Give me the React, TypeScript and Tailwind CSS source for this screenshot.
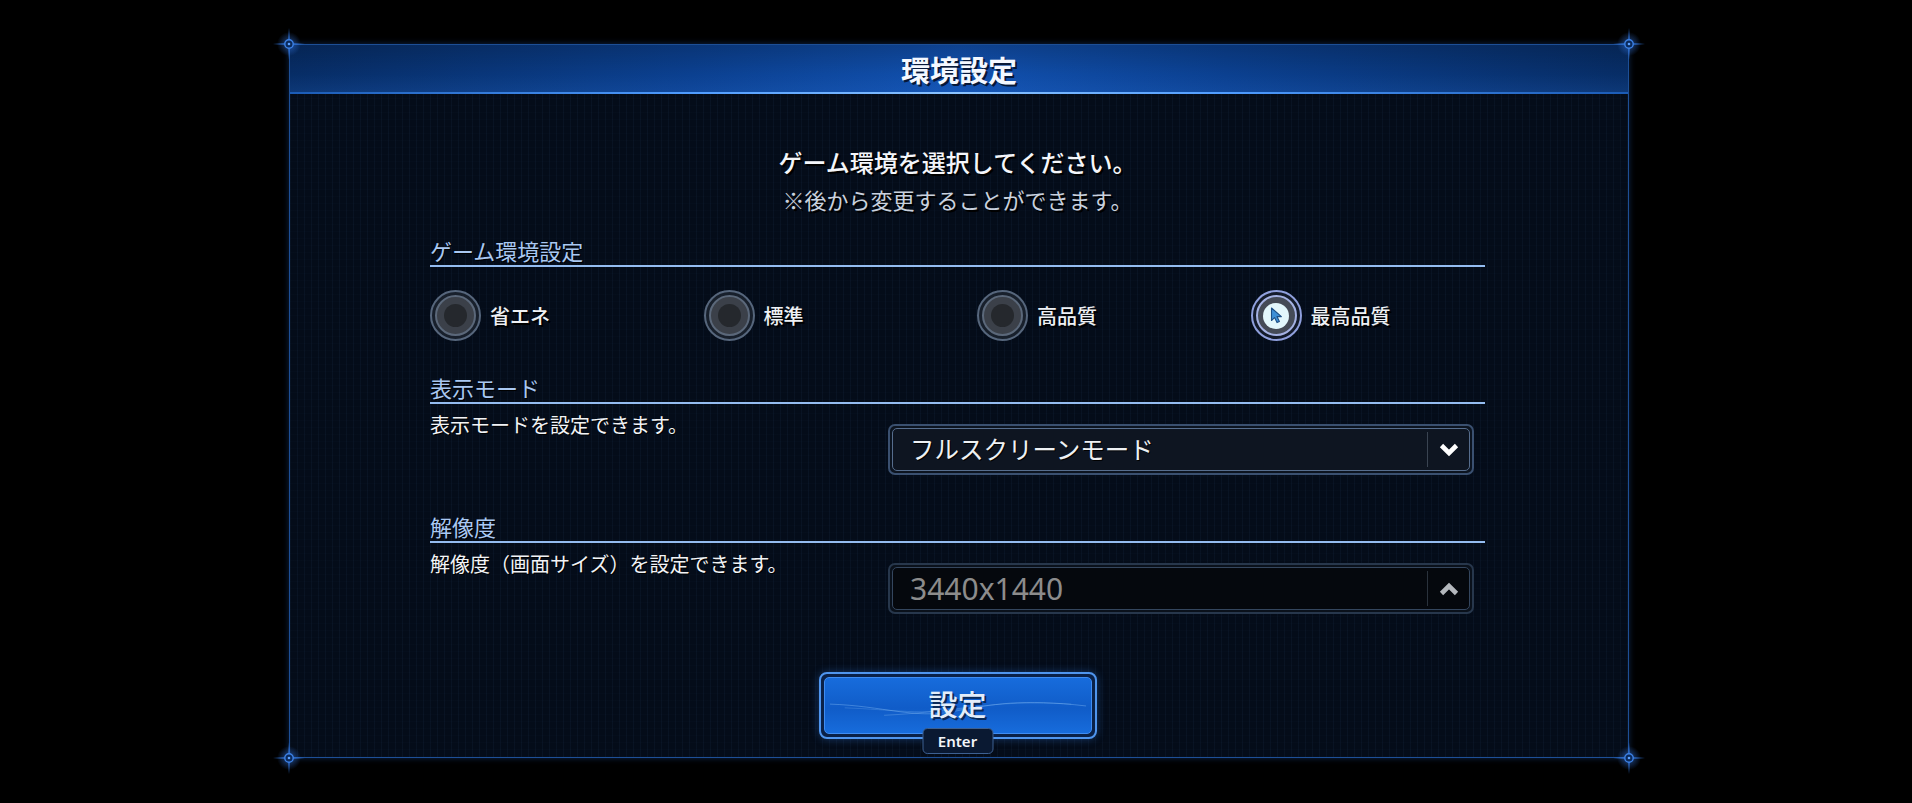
import React from "react";

const JP = "font-['Noto_Sans_CJK_JP','Noto_Sans',sans-serif]";

function CornerStar({ className }: { className: string }) {
  return (
    <svg
      className={"absolute w-[40px] h-[40px] pointer-events-none " + className}
      viewBox="0 0 40 40"
    >
      <defs>
        <radialGradient id="glow" cx="50%" cy="50%" r="50%">
          <stop offset="0%" stopColor="#3b82f6" stopOpacity="0.55" />
          <stop offset="100%" stopColor="#3b82f6" stopOpacity="0" />
        </radialGradient>
      </defs>
      <circle cx="20" cy="20" r="12" fill="url(#glow)" />
      <path d="M20 4 L21 19 L36 20 L21 21 L20 36 L19 21 L4 20 L19 19 Z" fill="#2f6fd0" />
      <circle cx="20" cy="20" r="4.2" fill="#0b2a5c" stroke="#3d82e6" strokeWidth="1.4" />
      <circle cx="20" cy="20" r="1.3" fill="#5aa0ff" />
    </svg>
  );
}

function Radio({ selected }: { selected?: boolean }) {
  if (selected) {
    return (
      <div className="w-[51px] h-[51px] shrink-0 rounded-full border-2 border-[#8f9fdc] bg-[#141b2b] p-[3px]">
        <div className="w-full h-full rounded-full border-2 border-[#a4b1e2] bg-[#454b57] p-[5.5px]">
          <div className="w-full h-full rounded-full bg-[#e3f7fc] flex items-center justify-center">
            <svg width="14" height="17" viewBox="0 0 14 17" className="ml-[2px]">
              <path
                d="M1.5 1 L1.5 13.5 L4.6 10.6 L7 15.6 L9.4 14.5 L7 9.6 L11.4 9.6 Z"
                fill="#3d8fd6"
                stroke="#1d4f86"
                strokeWidth="1.1"
                strokeLinejoin="round"
              />
            </svg>
          </div>
        </div>
      </div>
    );
  }
  return (
    <div className="w-[51px] h-[51px] shrink-0 rounded-full border-2 border-[#56667c] bg-[#18202c] p-[3px]">
      <div className="w-full h-full rounded-full border-2 border-[#5b687a] bg-[#3b4049] flex items-center justify-center">
        <div className="w-[23px] h-[23px] rounded-full bg-[#25282d]" />
      </div>
    </div>
  );
}

function SectionHeader({ children }: { children: React.ReactNode }) {
  return (
    <div className="border-b-2 border-[#94bcf0]">
      <div className={"text-[22px] leading-[29px] text-[#a9c8f2] [text-shadow:1px_1px_0_#000] " + JP}>
        {children}
      </div>
    </div>
  );
}

function Chevron({ up, color }: { up?: boolean; color: string }) {
  return (
    <svg width="20" height="16" viewBox="0 0 20 16">
      {up ? (
        <path d="M2.5 12.5 L10 5 L17.5 12.5" fill="none" stroke={color} strokeWidth="4.6" strokeLinejoin="miter" />
      ) : (
        <path d="M2.5 3.5 L10 11 L17.5 3.5" fill="none" stroke={color} strokeWidth="4.6" strokeLinejoin="miter" />
      )}
    </svg>
  );
}

function Dropdown({ value, disabled }: { value: string; disabled?: boolean }) {
  return (
    <div
      className={
        "w-[586px] h-[51px] rounded-[7px] border-2 p-[2px] " +
        (disabled ? "border-[#27374c] bg-[#0a111b]" : "border-[#3a5070] bg-[#0c1420]")
      }
    >
      <div
        className={
          "w-full h-full rounded-[5px] border flex items-stretch " +
          (disabled ? "border-[#34465e] bg-[#05080d]" : "border-[#566d8d] bg-[#0e1521]")
        }
      >
        <div
          className={
            "flex-1 flex items-center pl-[17px] " +
            (disabled
              ? "text-[30px] text-[#8c8c8c] font-['Noto_Sans','Noto_Sans_CJK_JP',sans-serif]"
              : "text-[24.5px] text-[#eef1f4] [text-shadow:1px_1px_0_#000] " + JP)
          }
        >
          {value}
        </div>
        <div className={"w-px my-[3px] " + (disabled ? "bg-[#2a323c]" : "bg-[#3a4452]")} />
        <div className="w-[41px] flex items-center justify-center">
          <Chevron up={disabled} color={disabled ? "#b4b8bd" : "#ffffff"} />
        </div>
      </div>
    </div>
  );
}

export default function App() {
  const options = ["省エネ", "標準", "高品質", "最高品質"];
  return (
    <div className="w-[1912px] h-[803px] bg-black overflow-hidden pt-[44px] pl-[289px]">
      <div className="relative w-[1340px] h-[714px]">
        <div className="w-full h-full border border-[#1d4f96] shadow-[0_0_6px_rgba(40,110,220,0.35)] bg-[#040c19] bg-[repeating-linear-gradient(90deg,rgba(60,100,150,0.08)_0px,rgba(60,100,150,0.08)_1px,transparent_1px,transparent_7px),repeating-linear-gradient(0deg,rgba(60,100,150,0.025)_0px,rgba(60,100,150,0.025)_1px,transparent_1px,transparent_7px)] flex flex-col">
          {/* Header */}
          <div className="relative h-[49px] shrink-0 bg-[linear-gradient(90deg,#072d66_0%,#0b4090_30%,#1150ae_50%,#0b4090_70%,#072d66_100%)]">
            <div className="absolute inset-0 bg-[linear-gradient(180deg,rgba(0,0,0,0.18),rgba(0,0,0,0)_60%,rgba(60,140,255,0.12))]" />
            <div className="relative h-full flex items-center justify-center">
              <span className={"text-[29px] leading-none font-bold text-[#f4f8ff] [text-shadow:2px_2px_0_#071838] " + JP}>
                環境設定
              </span>
            </div>
            <div className="absolute left-0 right-0 bottom-0 h-[2px] bg-[linear-gradient(90deg,#1b5bb5,#4f9cff_30%,#8cc4ff_50%,#4f9cff_70%,#1b5bb5)]" />
          </div>

          {/* Body */}
          <div className="ml-[140px] w-[1055px] flex flex-col">
            <div className={"mt-[51px] text-center text-[24px] leading-[34px] font-medium text-[#f4f6fa] [text-shadow:2px_2px_0_#000] " + JP}>
              ゲーム環境を選択してください。
            </div>
            <div className={"mt-[5px] text-center text-[22px] leading-[30px] text-[#c9d1de] [text-shadow:2px_2px_0_#000] " + JP}>
              ※後から変更することができます。
            </div>

            <div className="mt-[22px]">
              <SectionHeader>ゲーム環境設定</SectionHeader>
            </div>
            <div className="mt-[23px] flex">
              {options.map((o, i) => (
                <div key={o} className="w-[273.5px] shrink-0 flex items-center gap-[9px]">
                  <Radio selected={i === 3} />
                  <span className={"text-[20px] font-medium text-[#eef1f5] [text-shadow:2px_2px_0_#000] " + JP}>{o}</span>
                </div>
              ))}
            </div>

            <div className="mt-[32px]">
              <SectionHeader>表示モード</SectionHeader>
            </div>
            <div className="mt-[7px] flex items-start">
              <div className={"flex-1 text-[20px] leading-[28px] text-[#f2f4f7] [text-shadow:1px_1px_0_#000] " + JP}>
                表示モードを設定できます。
              </div>
              <div className="mt-[13px] mr-[11px]">
                <Dropdown value="フルスクリーンモード" />
              </div>
            </div>

            <div className="mt-[37px]">
              <SectionHeader>解像度</SectionHeader>
            </div>
            <div className="mt-[7px] flex items-start">
              <div className={"flex-1 text-[20px] leading-[28px] text-[#f2f4f7] [text-shadow:1px_1px_0_#000] " + JP}>
                解像度（画面サイズ）を設定できます。
              </div>
              <div className="mt-[13px] mr-[11px]">
                <Dropdown value="3440x1440" disabled />
              </div>
            </div>

            {/* Button */}
            <div className="mt-[58px] flex justify-center">
              <div className="relative w-[278px] h-[67px] rounded-[8px] border-2 border-[#4f95ee] bg-[#0a2148] p-[3px] shadow-[0_0_8px_rgba(60,140,255,0.35)]">
                <div className="relative w-full h-full rounded-[5px] border border-[#3f8cf2] bg-[linear-gradient(180deg,#176cdc,#105cc8_55%,#176cdc)] overflow-hidden flex items-center justify-center">
                  <svg className="absolute inset-0 w-full h-full" viewBox="0 0 270 59" preserveAspectRatio="none">
                    <path d="M5 28 C60 30, 90 44, 130 36 S200 22, 265 30" fill="none" stroke="rgba(160,210,255,0.35)" strokeWidth="1" />
                    <path d="M20 32 C70 34, 100 40, 140 33 S210 26, 250 28" fill="none" stroke="rgba(160,210,255,0.22)" strokeWidth="1" />
                    <path d="M60 40 C100 38, 120 34, 160 30" fill="none" stroke="rgba(180,220,255,0.25)" strokeWidth="1" />
                  </svg>
                  <span className={"relative -mt-[4px] text-[29px] font-medium text-[#e3edf9] [text-shadow:2px_2px_0_#0a2a5a] " + JP}>
                    設定
                  </span>
                </div>
                <div className="absolute left-1/2 -translate-x-1/2 top-[54px] w-[71px] h-[26px] rounded-[5px] border-[1.5px] border-[#3d6091] bg-[#0a1932] flex items-center justify-center">
                  <span className="text-[15px] font-semibold text-[#f4f6f9] font-['Noto_Sans',sans-serif] leading-none">Enter</span>
                </div>
              </div>
            </div>
          </div>
        </div>

        <CornerStar className="-left-[20px] -top-[20px]" />
        <CornerStar className="-right-[20px] -top-[20px]" />
        <CornerStar className="-left-[20px] -bottom-[20px]" />
        <CornerStar className="-right-[20px] -bottom-[20px]" />
      </div>
    </div>
  );
}
